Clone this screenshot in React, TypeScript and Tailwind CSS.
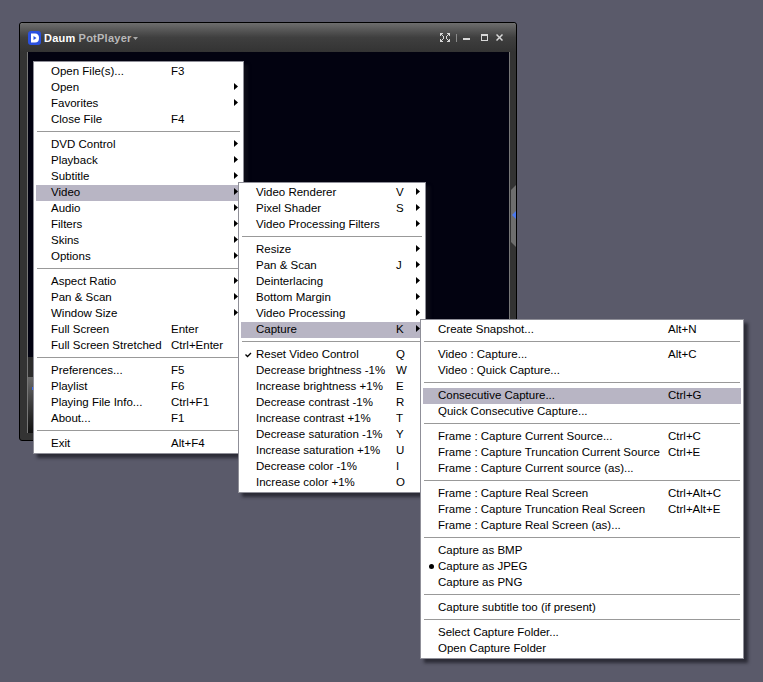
type Row = { label?: string; key?: string; arrow?: boolean; mark?: "check" | "dot"; active?: boolean; sep?: boolean };

const sep: Row = { sep: true };

const mainMenu: Row[] = [
  { label: "Open File(s)...", key: "F3" },
  { label: "Open", arrow: true },
  { label: "Favorites", arrow: true },
  { label: "Close File", key: "F4" },
  sep,
  { label: "DVD Control", arrow: true },
  { label: "Playback", arrow: true },
  { label: "Subtitle", arrow: true },
  { label: "Video", arrow: true, active: true },
  { label: "Audio", arrow: true },
  { label: "Filters", arrow: true },
  { label: "Skins", arrow: true },
  { label: "Options", arrow: true },
  sep,
  { label: "Aspect Ratio", arrow: true },
  { label: "Pan & Scan", arrow: true },
  { label: "Window Size", arrow: true },
  { label: "Full Screen", key: "Enter" },
  { label: "Full Screen Stretched", key: "Ctrl+Enter" },
  sep,
  { label: "Preferences...", key: "F5" },
  { label: "Playlist", key: "F6" },
  { label: "Playing File Info...", key: "Ctrl+F1" },
  { label: "About...", key: "F1" },
  sep,
  { label: "Exit", key: "Alt+F4" },
];

const videoMenu: Row[] = [
  { label: "Video Renderer", key: "V", arrow: true },
  { label: "Pixel Shader", key: "S", arrow: true },
  { label: "Video Processing Filters", arrow: true },
  sep,
  { label: "Resize", arrow: true },
  { label: "Pan & Scan", key: "J", arrow: true },
  { label: "Deinterlacing", arrow: true },
  { label: "Bottom Margin", arrow: true },
  { label: "Video Processing", arrow: true },
  { label: "Capture", key: "K", arrow: true, active: true },
  sep,
  { label: "Reset Video Control", key: "Q", mark: "check" },
  { label: "Decrease brightness -1%", key: "W" },
  { label: "Increase brightness +1%", key: "E" },
  { label: "Decrease contrast -1%", key: "R" },
  { label: "Increase contrast +1%", key: "T" },
  { label: "Decrease saturation -1%", key: "Y" },
  { label: "Increase saturation +1%", key: "U" },
  { label: "Decrease color -1%", key: "I" },
  { label: "Increase color +1%", key: "O" },
];

const captureMenu: Row[] = [
  { label: "Create Snapshot...", key: "Alt+N" },
  sep,
  { label: "Video : Capture...", key: "Alt+C" },
  { label: "Video : Quick Capture..." },
  sep,
  { label: "Consecutive Capture...", key: "Ctrl+G", active: true },
  { label: "Quick Consecutive Capture..." },
  sep,
  { label: "Frame : Capture Current Source...", key: "Ctrl+C" },
  { label: "Frame : Capture Truncation Current Source", key: "Ctrl+E" },
  { label: "Frame : Capture Current source (as)..." },
  sep,
  { label: "Frame : Capture Real Screen", key: "Ctrl+Alt+C" },
  { label: "Frame : Capture Truncation Real Screen", key: "Ctrl+Alt+E" },
  { label: "Frame : Capture Real Screen (as)..." },
  sep,
  { label: "Capture as BMP" },
  { label: "Capture as JPEG", mark: "dot" },
  { label: "Capture as PNG" },
  sep,
  { label: "Capture subtitle too (if present)" },
  sep,
  { label: "Select Capture Folder..." },
  { label: "Open Capture Folder" },
];

function Menu({ rows, keyWidth, className }: { rows: Row[]; keyWidth: string; className: string }) {
  return (
    <div className={`absolute border border-[#8f8f98] bg-white pb-[1px] pt-[2px] shadow-[4px_4px_3px_rgba(20,20,28,0.65)] ${className}`}>
      {rows.map((row, i) =>
        row.sep ? (
          <div key={i} className="h-[9px] px-[3px] pt-[3px]">
            <div className="h-px w-full bg-[#999999]" />
          </div>
        ) : (
          <div key={i} className={`relative mx-[2px] flex h-4 items-start pl-[15px] pr-[15px] ${row.active ? "bg-[#b8b5c4]" : ""}`}>
            {row.mark === "check" && (
              <svg className="absolute left-[4px] top-[5px]" width="7" height="6" viewBox="0 0 7 6">
                <path d="M0.5 2.5 L2.5 4.5 L6 1" fill="none" stroke="#000" strokeWidth="1.3" />
              </svg>
            )}
            {row.mark === "dot" && <span className="absolute left-[6px] top-[5px] h-[5px] w-[5px] rounded-full bg-black" />}
            <span className="min-w-0 flex-1 whitespace-pre">{row.label}</span>
            <span className={`shrink-0 whitespace-pre ${keyWidth}`}>{row.key}</span>
            {row.arrow && (
              <svg className="absolute right-[3px] top-[3px]" width="4" height="7" viewBox="0 0 4 7">
                <path d="M0 0 L4 3.5 L0 7 Z" fill="#000" />
              </svg>
            )}
          </div>
        )
      )}
    </div>
  );
}

export default function App() {
  return (
    <div className="relative h-[682px] w-[763px] overflow-hidden bg-[#5a5a6a] font-['Liberation_Sans',sans-serif] text-[11.5px] leading-[14px] text-black">
      <div className="absolute left-[19px] top-[22px] flex h-[419px] w-[498px] flex-col rounded-t-[3px] rounded-bl-[3px] border border-black bg-[#333333] shadow-[inset_0_1px_0_#a0a0a0]">
        {/* title bar */}
        <div className="flex h-[29px] shrink-0 items-center rounded-t-[3px] bg-gradient-to-b from-[#6e6e6e] via-[#3f3f3f] to-[#333333] pl-[8px] pr-[13px]">
          <svg width="13" height="14" viewBox="0 0 13 14">
            <rect width="13" height="14" rx="3" fill="#2a50e0" />
            <path d="M3 2.5 H7 Q11 2.5 11 7 Q11 11.5 7 11.5 H3 Z" fill="#fff" />
            <path d="M5.5 5 L8.5 7 L5.5 9 Z" fill="#2a50e0" />
          </svg>
          <span className="ml-[3px] text-[11px] font-bold tracking-[0.25px] text-white">Daum</span>
          <span className="ml-[3px] text-[11px] font-bold tracking-[0.25px] text-[#b9b9b9]">PotPlayer</span>
          <svg className="ml-[1px] mt-[1px]" width="5" height="3" viewBox="0 0 5 3">
            <path d="M0 0 H5 L2.5 3 Z" fill="#aaa" />
          </svg>
          <div className="ml-auto flex items-center">
            <svg width="10" height="9" viewBox="0 0 10 9" fill="#d8d8d8">
              <path d="M0 0 H3 V1 H2 V2 H3 V3 H4 V6 H3 V7 H2 V8 H3 V9 H0 V6 H1 V7 H2 V6 H3 V3 H2 V2 H1 V3 H0 Z" />
              <path d="M10 0 H7 V1 H8 V2 H7 V3 H6 V6 H7 V7 H8 V8 H7 V9 H10 V6 H9 V7 H8 V6 H7 V3 H8 V2 H9 V3 H10 Z" />
            </svg>
            <div className="ml-[6px] h-2 w-px bg-[#8a8a8a]" />
            <div className="ml-[6px] mt-[3px] h-[2px] w-[7px] bg-[#d8d8d8]" />
            <div className="ml-[11px] h-[7px] w-[7px] border border-t-2 border-[#d8d8d8]" />
            <svg className="ml-[8px]" width="7" height="7" viewBox="0 0 7 7">
              <path d="M0.5 0.5 L6.5 6.5 M6.5 0.5 L0.5 6.5" stroke="#d8d8d8" strokeWidth="1.5" />
            </svg>
          </div>
        </div>
        <div className="flex flex-1 pb-[7px] pl-[7px] pr-[6px]">
          <div className="flex flex-1 flex-col border-l border-[#777] bg-[#020210]">
            <div className="flex-1" />
            {/* control panel, mostly hidden behind the menu */}
            <div className="h-[20px] bg-[#2c2c2c]" />
            <div className="relative h-[56px] bg-gradient-to-b from-[#6a6a6a] to-[#111111]">
              <div className="absolute left-[4px] top-[10px] h-[3px] w-[2px] bg-[#3a6af0]" />
            </div>
          </div>
          <div className="w-px bg-[#777]" />
        </div>
      </div>

      {/* side panel handle */}
      <svg className="absolute left-[511px] top-[185px]" width="5" height="62" viewBox="0 0 5 62">
        <path d="M0 5 L5 0 V62 L0 57 Z" fill="#6e6e6e" />
        <path d="M1 30 L5 26 V34 Z" fill="#4a78f0" />
      </svg>

      <Menu rows={mainMenu} keyWidth="w-[55px]" className="left-[33px] top-[61px] w-[211px]" />
      <Menu rows={videoMenu} keyWidth="w-[12px]" className="left-[238px] top-[182px] w-[188px]" />
      <Menu rows={captureMenu} keyWidth="w-[58px]" className="left-[420px] top-[319px] w-[324px]" />
    </div>
  );
}
